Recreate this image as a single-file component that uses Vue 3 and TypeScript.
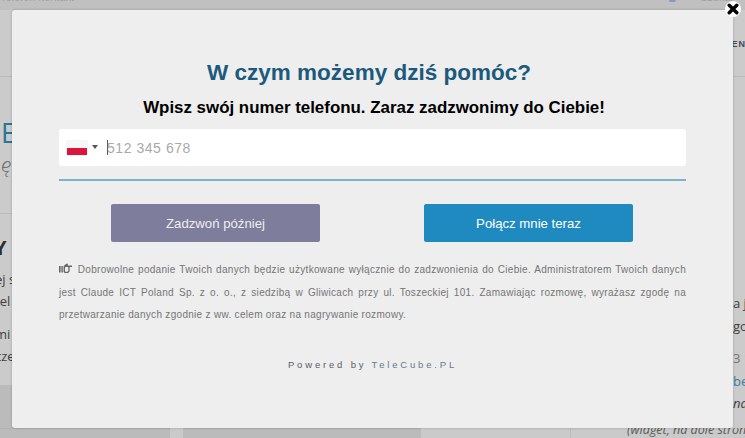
<script setup lang="ts">
const notice = 'Dobrowolne podanie Twoich danych będzie użytkowane wyłącznie do zadzwonienia do Ciebie. Administratorem Twoich danych jest Claude ICT Poland Sp. z o. o., z siedzibą w Gliwicach przy ul. Toszeckiej 101. Zamawiając rozmowę, wyrażasz zgodę na przetwarzanie danych zgodnie z ww. celem oraz na nagrywanie rozmowy.'
</script>

<template>
  <div class="page">
    <div class="backdrop">
      <div class="top-strip">
        <span class="top-left">Telefon kontakt</span>
        <span class="top-dot"></span>
        <span class="top-right">Szukaj</span>
      </div>
      <div class="header-band"><span class="nav-bit">ENN</span></div>
      <div class="columns">
        <div class="col-left">
          <div class="left-hero">
            <span class="hero-e">E</span>
            <span class="hero-sub">ę</span>
          </div>
          <div class="left-copy">
            <div class="left-y">Y</div>
            <p>ej s</p>
            <p>tel</p>
            <p class="gap">mi</p>
            <p>cze</p>
          </div>
          <div class="left-foot"></div>
        </div>
        <div class="col-right">
          <p>a j</p>
          <p>goc</p>
          <p class="gap muted">3 1</p>
          <p class="link">be</p>
          <p class="ital">nar</p>
        </div>
      </div>
      <div class="bottom-strip">
        <i class="seg dark s1"></i>
        <i class="seg light s2"></i>
        <i class="seg dark s3"></i>
        <i class="seg light s4"></i>
        <div class="seg light s5"><span class="widget">(widget, na dole strony)</span></div>
      </div>
    </div>

    <section class="modal">
      <button class="close" aria-label="Zamknij">
        <svg width="12" height="12" viewBox="0 0 12 12"><path d="M2.2 2.2 L9.8 9.8 M9.8 2.2 L2.2 9.8" stroke="#000" stroke-width="3.4" stroke-linecap="round" /></svg>
      </button>
      <h1 class="title">W czym możemy dziś pomóc?</h1>
      <h2 class="subtitle">Wpisz swój numer telefonu. Zaraz zadzwonimy do Ciebie!</h2>
      <div class="phone">
        <span class="flag"><i class="white"></i><i class="red"></i></span>
        <span class="caret"></span>
        <span class="cursor"></span>
        <span class="placeholder">512 345 678</span>
      </div>
      <div class="rule"></div>
      <div class="actions">
        <button class="btn later">Zadzwoń później</button>
        <button class="btn now">Połącz mnie teraz</button>
      </div>
      <p class="notice">
        <svg class="hand" width="13" height="11" viewBox="0 0 13 11">
          <path d="M0 3h1.6v6.4H0zM2.4 3h1.4v6.4H2.4z" fill="#666" />
          <path d="M4.6 3.2 7.2.8h1.9L8.5 2.5H13v1.5H10.6V8.6L9 10H5.8L4.6 9zM6 3.9v4.5l.5.4h2l.8-.7V3.9z" fill="#666" fill-rule="evenodd" />
        </svg>
        {{ notice }}
      </p>
      <p class="powered">Powered by <span>TeleCube.PL</span></p>
    </section>
  </div>
</template>

<style>
html, body { margin: 0; padding: 0; overflow: hidden; }
</style>

<style scoped>
.page {
  position: relative;
  width: 745px;
  height: 438px;
  overflow: hidden;
  font-family: "Liberation Sans", Arial, sans-serif;
  background: #cbcbcb;
}
.backdrop {
  display: flex;
  flex-direction: column;
  height: 438px;
}
.top-strip {
  height: 10px;
  background: #c0c0c0;
  flex: none;
  display: flex;
  align-items: flex-start;
  overflow: hidden;
  font-size: 11px;
  line-height: 8px;
  color: #a0a0a0;
}
.top-left { margin-top: -7px; }
.top-dot {
  width: 7px;
  height: 2px;
  margin-left: auto;
  margin-right: 24px;
  background: #7f9eb0;
  border-radius: 0 0 3px 3px;
}
.top-right { margin: -7px 12px 0 0; }
.header-band {
  height: 67px;
  flex: none;
  border-bottom: 1px solid #bcbcbc;
  display: flex;
  justify-content: flex-end;
  align-items: center;
  box-sizing: border-box;
}
.nav-bit {
  font: 700 9px "Liberation Sans", sans-serif;
  letter-spacing: 1.2px;
  color: #4a4a4a;
  margin-right: -9px;
  margin-top: 1px;
}
.columns {
  height: 351px;
  flex: none;
  display: flex;
  justify-content: space-between;
}
.col-left { width: 40px; display: flex; flex-direction: column; }
.left-hero {
  height: 137px;
  flex: none;
  box-sizing: border-box;
  border-bottom: 1px solid #bcbcbc;
  padding-top: 41px;
}
.hero-e {
  display: block;
  font: 400 27px/30px "Open Sans", sans-serif;
  color: #2a7596;
  margin-left: 1px;
}
.hero-sub {
  display: block;
  font: italic 300 21px/24px "Open Sans", sans-serif;
  color: #6a6a6a;
  margin-top: 4px;
  margin-left: 1px;
}
.left-copy {
  height: 171px;
  flex: none;
  box-sizing: border-box;
  padding-top: 22px;
  color: #3f3f3f;
  font: 13px/22px "Open Sans", sans-serif;
}
.left-y { font: 700 20px/24px "Open Sans", sans-serif; margin-left: -6px; margin-bottom: 8px; color: #2e2e2e; }
.left-copy p { margin: 0 0 0 -5px; height: 22px; white-space: nowrap; }
.left-copy p.gap { margin-top: 11px; }
.left-foot { flex: 1; background: #bbbbbb; }
.col-right {
  width: 12px;
  padding-top: 215px;
  font: 13px/23px "Open Sans", sans-serif;
  color: #3f3f3f;
}
.col-right p { margin: 0; height: 22.5px; white-space: nowrap; }
.col-right .gap { margin-top: 10px; }
.col-right .muted { color: #757575; }
.col-right .link { color: #3a7ea3; }
.col-right .ital { font-style: italic; }
.bottom-strip { flex: 1; display: flex; }
.seg { display: block; height: 100%; box-sizing: border-box; }
.dark { background: #bbbbbb; border-top: 1px solid #b2b2b2; }
.light { background: #cacaca; }
.s1 { width: 170px; }
.s2 { width: 13px; }
.s3 { width: 237px; }
.s4 { width: 150px; border-left: 1px solid #bdbdbd; }
.s5 { flex: 1; border-left: 1px solid #bdbdbd; white-space: nowrap; overflow: hidden; }
.widget {
  display: block;
  margin: -6px 0 0 56px;
  font: italic 12.5px/16px "Open Sans", sans-serif;
  color: #5b5b5b;
}

.modal {
  position: absolute;
  left: 12px;
  top: 10px;
  width: 721px;
  height: 418px;
  box-sizing: border-box;
  background: #eeeeee;
  border-radius: 3px;
  box-shadow: 0 0 3px rgba(0,0,0,.2);
  padding: 48px 47px 0;
  display: flex;
  flex-direction: column;
}
.close {
  position: absolute;
  right: -8px;
  top: -9px;
  width: 16px;
  height: 16px;
  padding: 0;
  border: 0;
  border-radius: 50%;
  background: #fff;
  display: flex;
  align-items: center;
  justify-content: center;
}
.title {
  margin: 0;
  padding-right: 7px;
  text-align: center;
  font: 700 22.5px/30px "Liberation Sans", sans-serif;
  color: #1c5a7d;
}
.subtitle {
  margin: 9px 0 0;
  padding-left: 3px;
  text-align: center;
  font: 700 16.9px/22px "Liberation Sans", sans-serif;
  color: #000;
}
.phone {
  margin-top: 10px;
  height: 37px;
  flex: none;
  background: #fff;
  border-radius: 3px;
  display: flex;
  align-items: center;
  padding-left: 8px;
}
.flag {
  width: 20px;
  height: 14px;
  display: flex;
  flex-direction: column;
  box-shadow: 0 0 1px #bbb;
  margin-top: 1px;
}
.flag i { flex: 1; display: block; }
.flag .white { background: #f6f6f6; }
.flag .red { background: #dc143c; }
.caret {
  width: 0;
  height: 0;
  border-left: 3px solid transparent;
  border-right: 3px solid transparent;
  border-top: 4px solid #555;
  margin-left: 5px;
  margin-top: -1px;
}
.cursor {
  width: 1px;
  height: 15px;
  background: #555;
  margin-left: 9px;
}
.placeholder {
  font-size: 14px;
  letter-spacing: .55px;
  color: #a9a9a9;
  margin-left: -1px;
}
.rule {
  margin-top: 13px;
  height: 1.5px;
  flex: none;
  background: #7fb3c9;
}
.actions {
  margin-top: 23.5px;
  display: flex;
  justify-content: space-between;
  padding: 0 53px 0 52px;
}
.btn {
  width: 209px;
  height: 38px;
  border: 0;
  border-radius: 2px;
  color: #fff;
  font: 13.2px "Liberation Sans", sans-serif;
  padding: 0;
}
.later { background: #7f7d9c; color: #eee; }
.now { background: #1f8abf; }
.notice {
  margin: 17px 0 0;
  font-size: 10px;
  line-height: 22.5px;
  color: #757575;
  text-align: justify;
  letter-spacing: .3px;
}
.hand { margin-right: 2px; vertical-align: -1px; }
.powered {
  margin: 32px 0 0;
  text-align: center;
  font-size: 9.5px;
  letter-spacing: 2.82px;
  color: #5c5c68;
}
.powered span { color: #667a90; }
</style>
